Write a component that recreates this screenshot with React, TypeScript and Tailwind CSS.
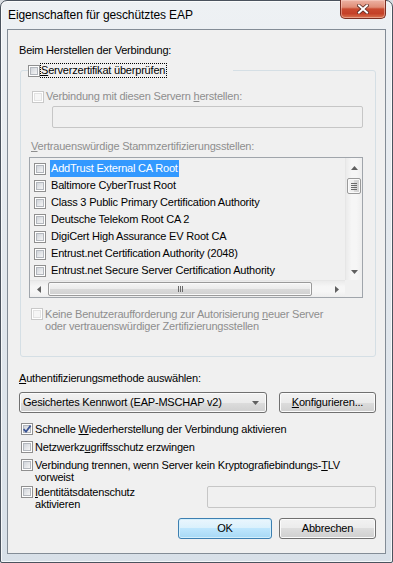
import React from "react";

const items = [
  "AddTrust External CA Root",
  "Baltimore CyberTrust Root",
  "Class 3 Public Primary Certification Authority",
  "Deutsche Telekom Root CA 2",
  "DigiCert High Assurance EV Root CA",
  "Entrust.net Certification Authority (2048)",
  "Entrust.net Secure Server Certification Authority",
];

function Check({ checked = false, disabled = false }: { checked?: boolean; disabled?: boolean }) {
  return (
    <div
      className={
        "w-[12px] h-[12px] shrink-0 border bg-white p-[1px] " +
        (disabled ? "border-[#c9c9c9]" : "border-[#8f8f8f]")
      }
    >
      <div
        className={
          "w-full h-full border flex items-center justify-center " +
          (disabled
            ? "border-[#e3e3e3] bg-[#f6f6f6]"
            : "border-[#b3b7bd] bg-[linear-gradient(135deg,#d0d4da,#f5f5f5)]")
        }
      >
        {checked && (
          <svg width="8" height="8" viewBox="0 0 8 8" className="overflow-visible">
            <path d="M0.6 4.1 L3 6.7 L7.6 0.6" fill="none" stroke="#3c5595" strokeWidth="1.8" />
          </svg>
        )}
      </div>
    </div>
  );
}

function Btn({
  children,
  def = false,
  className = "",
}: {
  children: React.ReactNode;
  def?: boolean;
  className?: string;
}) {
  return (
    <div
      className={
        "h-[21px] rounded-[3px] border flex items-center justify-center shrink-0 " +
        (def
          ? "border-[#3c7fb1] bg-[linear-gradient(to_bottom,#eaf6fd,#d9f0fc_50%,#bee6fd_50%,#a7d9f5)] shadow-[inset_0_0_0_1px_#d4effc] "
          : "border-[#707070] bg-[linear-gradient(to_bottom,#f2f2f2,#ebebeb_50%,#dddddd_50%,#cfcfcf)] shadow-[inset_0_0_0_1px_#fbfbfb] ") +
        className
      }
    >
      {children}
    </div>
  );
}

function Arrow({ dir }: { dir: "up" | "down" | "left" | "right" }) {
  const d =
    dir === "up"
      ? "M0 4 L3.5 0 L7 4Z"
      : dir === "down"
      ? "M0 0 L7 0 L3.5 4Z"
      : dir === "left"
      ? "M4 0 L4 7 L0 3.5Z"
      : "M0 0 L4 3.5 L0 7Z";
  const w = dir === "up" || dir === "down" ? 7 : 4;
  const h = dir === "up" || dir === "down" ? 4 : 7;
  return (
    <svg width={w} height={h} viewBox={`0 0 ${w} ${h}`}>
      <path d={d} fill="#606060" />
    </svg>
  );
}

function VScroll() {
  return (
    <div className="w-[17px] h-[122px] shrink-0 flex flex-col border-l border-[#e6e6e6] bg-[linear-gradient(to_right,#ebebeb,#f6f6f6_35%,#f6f6f6_65%,#eeeeee)]">
      <div className="h-[20px] flex items-center justify-center">
        <Arrow dir="up" />
      </div>
      <div className="mx-[1px] h-[16px] rounded-[2px] border border-[#9a9a9a] bg-[linear-gradient(to_right,#f5f5f5,#ebebeb_50%,#dadada_50%,#d0d0d0)] shadow-[inset_0_0_0_1px_#fafafa] flex flex-col items-center justify-center gap-[1px]">
        <div className="w-[6px] h-px bg-[#6a6a6a]" />
        <div className="w-[6px] h-px bg-[#6a6a6a]" />
        <div className="w-[6px] h-px bg-[#6a6a6a]" />
        <div className="w-[6px] h-px bg-[#6a6a6a]" />
      </div>
      <div className="flex-1" />
      <div className="h-[17px] flex items-center justify-center">
        <Arrow dir="down" />
      </div>
    </div>
  );
}

function HScroll() {
  return (
    <div className="w-[315px] h-[17px] shrink-0 flex border-t border-[#e6e6e6] bg-[linear-gradient(to_bottom,#ebebeb,#f6f6f6_35%,#f6f6f6_65%,#eeeeee)]">
      <div className="w-[17px] flex items-center justify-center">
        <Arrow dir="left" />
      </div>
      <div className="ml-[1px] w-[264px] my-[1px] rounded-[2px] border border-[#9a9a9a] bg-[linear-gradient(to_bottom,#f5f5f5,#ebebeb_50%,#dadada_50%,#d0d0d0)] shadow-[inset_0_0_0_1px_#fafafa] flex items-center justify-center gap-[1px]">
        <div className="w-px h-[6px] bg-[#6a6a6a]" />
        <div className="w-px h-[6px] bg-[#6a6a6a]" />
        <div className="w-px h-[6px] bg-[#6a6a6a]" />
      </div>
      <div className="flex-1" />
      <div className="w-[17px] flex items-center justify-center">
        <Arrow dir="right" />
      </div>
    </div>
  );
}

function CloseBtn() {
  return (
    <div className="w-[46px] h-[19px] -mt-[1px] rounded-b-[5px] border border-t-0 border-[#7a2e22] bg-[linear-gradient(to_bottom,#edb3a4,#e08d77_40%,#c94a30_50%,#c44028_75%,#d8734f)] shadow-[inset_0_0_0_1px_rgba(255,220,210,0.45)] flex items-center justify-center">
      <svg width="12" height="10" viewBox="0 0 12 10">
        <path d="M2 1.5 L10 8.5 M10 1.5 L2 8.5" stroke="#5a2a22" strokeWidth="3.6" strokeLinecap="square" />
        <path d="M2 1.5 L10 8.5 M10 1.5 L2 8.5" stroke="#ffffff" strokeWidth="2" strokeLinecap="square" />
      </svg>
    </div>
  );
}

export default function App() {
  return (
    <div className="w-[393px] h-[563px] bg-[#d9dde2] font-['Liberation_Sans',Arial,sans-serif] text-[11px] tracking-[-0.2px] text-black">
      <div className="w-full h-full rounded-t-[7px] rounded-b-[2px] border border-[#4b535e] bg-[linear-gradient(to_bottom,#eef1f4,#e4e9ee_40%,#d8e0e8)] shadow-[inset_0_0_0_1px_rgba(255,255,255,0.75)] flex flex-col px-[6px] pb-[8px]">
        {/* title bar */}
        <div className="h-[28px] shrink-0 flex items-start justify-between">
          <div className="pt-[7px] pl-[1px] leading-[15px] text-[12px] tracking-[-0.1px]">Eigenschaften für geschütztes EAP</div>
          <CloseBtn />
        </div>

        {/* client */}
        <div className="flex-1 border border-[#838c96] bg-[#f0f0f0] flex flex-col">
          <div className="mt-[13px] ml-[11px] leading-[15px]">Beim Herstellen der Verbindung:</div>

          <fieldset className="mt-[5px] ml-[12px] mr-[9px] min-w-0 p-0 m-0 border border-[#d5dfe5] rounded-[3px]">
            <legend className="ml-[7px] w-[205px] h-[15px] p-0 flex items-center">
              <Check />
              <span className="ml-0 pl-0 pr-[1px] leading-[13px] border border-dotted border-black whitespace-nowrap">
                <span className="underline underline-offset-[1px]">S</span>erverzertifikat überprüfen
              </span>
            </legend>

            <div className="flex flex-col pb-[24px]">
              <div className="mt-[11px] ml-[11px] h-[15px] flex items-center">
                <Check disabled />
                <span className="ml-[2px] text-[#8e8e8e] leading-[15px]">
                  Verbindung mit diesen Servern <span className="underline underline-offset-[1px]">h</span>erstellen:
                </span>
              </div>
              <div className="mt-[2px] ml-[31px] w-[311px] h-[22px] border border-[#c6c6c6] rounded-[2px] bg-[#f0f0f0]" />

              <div className="mt-[11px] ml-[10px] leading-[15px] text-[#8e8e8e]">
                <span className="underline underline-offset-[1px]">V</span>ertrauenswürdige Stammzertifizierungsstellen:
              </div>

              <div className="mt-[3px] ml-[8px] w-[334px] h-[141px] border border-[#a0a5ab] bg-[#f0f0f0] flex flex-col">
                <div className="flex h-[122px]">
                  <div className="w-[315px] overflow-hidden pt-[2px]">
                    {items.map((t, i) => (
                      <div key={t} className="h-[17px] flex items-center pl-[4px] whitespace-nowrap">
                        <Check />
                        <span
                          className={
                            "ml-[4px] px-[1px] h-[17px] leading-[17px] " +
                            (i === 0 ? "bg-[#3399ff] text-white" : "")
                          }
                        >
                          {t}
                        </span>
                      </div>
                    ))}
                  </div>
                  <VScroll />
                </div>
                <div className="flex h-[17px]">
                  <HScroll />
                  <div className="w-[17px] bg-[#f0f0f0]" />
                </div>
              </div>

              <div className="mt-[10px] ml-[10px] flex items-start">
                <Check disabled />
                <span className="ml-[2px] leading-[12px] text-[#8e8e8e]">
                  Keine Benutzeraufforderung zur Autorisierung <span className="underline underline-offset-[1px]">n</span>euer Server
                  <br />
                  oder vertrauenswürdiger Zertifizierungsstellen
                </span>
              </div>
            </div>
          </fieldset>

          <div className="mt-[14px] ml-[11px] leading-[15px]">
            <span className="underline underline-offset-[1px]">A</span>uthentifizierungsmethode auswählen:
          </div>

          <div className="mt-[6px] ml-[11px] mr-[9px] flex items-center">
            <Btn className="w-[248px] !justify-between pl-[3px] pr-[7px]">
              <span>Gesichertes Kennwort (EAP-MSCHAP v2)</span>
              <Arrow dir="down" />
            </Btn>
            <div className="flex-1" />
            <Btn className="w-[97px]">
              <span>
                <span className="underline underline-offset-[1px]">K</span>onfigurieren...
              </span>
            </Btn>
          </div>

          <div className="mt-[10px] ml-[13px] flex items-start">
            <Check checked />
            <span className="ml-[2px] leading-[12px]">
              Schnelle <span className="underline underline-offset-[1px]">W</span>iederherstellung der Verbindung aktivieren
            </span>
          </div>

          <div className="mt-[6px] ml-[13px] flex items-start">
            <Check />
            <span className="ml-[2px] leading-[12px]">
              Netzwerkz<span className="underline underline-offset-[1px]">u</span>griffsschutz erzwingen
            </span>
          </div>

          <div className="mt-[6px] ml-[13px] flex items-start">
            <Check />
            <span className="ml-[2px] leading-[12px]">
              Verbindung trennen, wenn Server kein Kryptografiebindungs-<span className="underline underline-offset-[1px]">T</span>LV
              <br />
              vorweist
            </span>
          </div>

          <div className="mt-[3px] ml-[13px] mr-[9px] flex items-start">
            <Check />
            <span className="ml-[2px] leading-[12px]">
              <span className="underline underline-offset-[1px]">I</span>dentitätsdatenschutz
              <br />
              aktivieren
            </span>
            <div className="flex-1" />
            <div className="w-[169px] h-[22px] border border-[#c6c6c6] rounded-[2px] bg-[#f0f0f0]" />
          </div>

          <div className="mt-[8px] mr-[9px] flex justify-end gap-[7px]">
            <Btn def className="w-[94px]">
              OK
            </Btn>
            <Btn className="w-[97px]">Abbrechen</Btn>
          </div>
        </div>
      </div>
    </div>
  );
}
